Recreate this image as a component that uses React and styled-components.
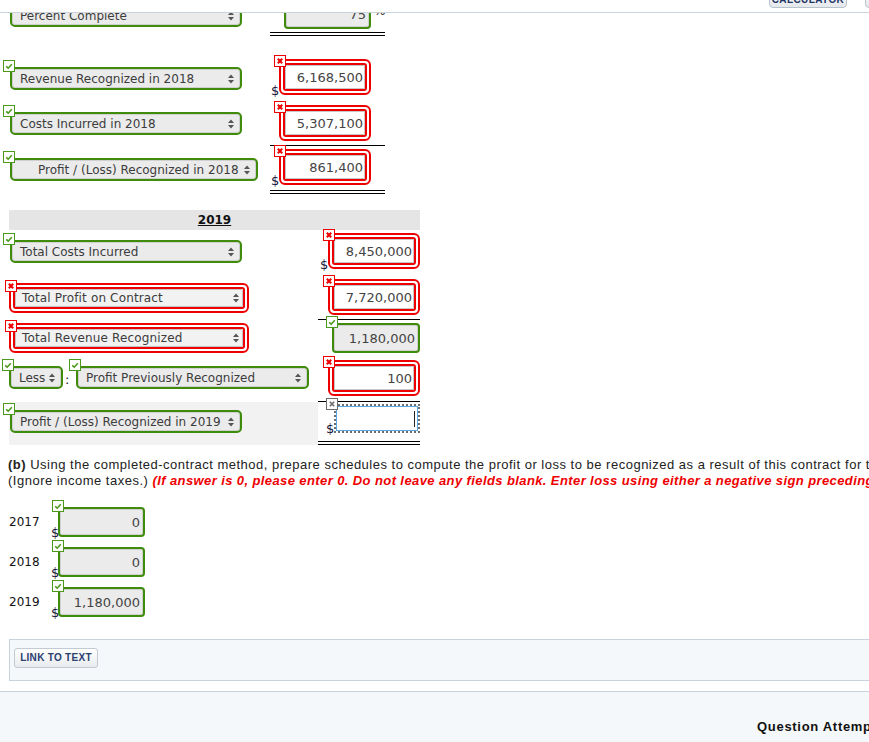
import React from 'react';
import styled, { createGlobalStyle } from 'styled-components';

const GREEN = '#3f8b0c';
const RED = '#ee0000';

const GlobalStyle = createGlobalStyle`
  html, body {
    margin: 0;
    padding: 0;
    background: #fff;
    overflow: hidden;
  }
  body {
    font-family: "DejaVu Sans", Verdana, sans-serif;
    color: #222;
  }
`;

const Page = styled.div`
  width: 869px;
  height: 742px;
  display: flex;
  flex-direction: column;
  overflow: hidden;
`;

const Header = styled.div`
  flex-shrink: 0;
  height: 12px;
  border-bottom: 1px solid #cdd3da;
  display: flex;
  gap: 18px;
  padding-left: 769px;
  overflow: hidden;
`;

const TopButton = styled.div`
  flex-shrink: 0;
  width: ${p => p.$w}px;
  height: 22px;
  margin-top: -14px;
  box-sizing: border-box;
  border: 1px solid #b8c2cd;
  border-radius: 4px;
  background: linear-gradient(#fbfbfb, #e6e9ec);
  font: bold 10px "Liberation Sans", Arial, sans-serif;
  letter-spacing: 0.4px;
  color: #1f3466;
  display: flex;
  align-items: center;
  justify-content: center;
  padding-top: 4px;
`;

const Main = styled.div`
  flex: 1;
  overflow: hidden;
  display: flex;
  flex-direction: column;
`;

const Content = styled.div`
  padding-left: 9px;
  display: flex;
  flex-direction: column;
`;

const Row = styled.div`
  display: grid;
  grid-template-columns: ${p => p.$left}px ${p => p.$right}px;
  height: ${p => p.$h}px;
  margin-top: ${p => p.$mt || 0}px;
`;

const LeftCell = styled.div`
  display: flex;
  align-items: flex-end;
  box-sizing: border-box;
  padding-bottom: ${p => p.$pb}px;
  background: ${p => (p.$shade ? '#f2f2f2' : 'transparent')};
`;

const RightCell = styled.div`
  display: flex;
  align-items: flex-end;
  justify-content: flex-end;
  box-sizing: border-box;
  padding-bottom: ${p => p.$pb}px;
  padding-right: ${p => p.$pr || 0}px;
  border-bottom: ${p =>
    p.$rule === 'double' ? '4px double #000' : p.$rule === 'single' ? '1px solid #000' : 'none'};
`;

const Field = styled.div`
  position: relative;
  display: inline-flex;
  margin-left: ${p => p.$ml || 0}px;
`;

const Badge = styled.span`
  position: absolute;
  top: ${p => p.$top}px;
  left: ${p => p.$left}px;
  width: 12px;
  height: 12px;
  box-sizing: border-box;
  border: 1px solid ${p => p.$color};
  background: #fff;
  display: flex;
  align-items: center;
  justify-content: center;
  z-index: 2;
`;

const SelectBox = styled.div`
  width: ${p => p.$w}px;
  height: 23px;
  box-sizing: border-box;
  border: 2px solid ${GREEN};
  border-radius: 5px;
  background: #ebebeb;
  box-shadow: inset 0 0 0 1px #d0d0d0;
  display: flex;
  align-items: center;
  justify-content: space-between;
  padding: 0 6px 0 ${p => p.$indent || 8}px;
  font-size: 12px;
  color: #3c3c3c;
  white-space: nowrap;
`;

const RedFrame = styled.div`
  width: ${p => p.$w}px;
  height: ${p => p.$h}px;
  box-sizing: border-box;
  border: 2px solid ${RED};
  border-radius: 6px;
  padding: 2px;
  background: #fff;
  display: flex;
`;

const RedInner = styled.div`
  flex: 1;
  display: flex;
  border: 2px solid ${RED};
  border-radius: 3px;
`;

const PlainSelect = styled.div`
  flex: 1;
  box-sizing: border-box;
  border: 1px solid #c4c4c4;
  border-radius: 2px;
  background: #f2f2f2;
  display: flex;
  align-items: center;
  justify-content: space-between;
  padding: 0 3px 0 6px;
  font-size: 12px;
  letter-spacing: 0.15px;
  color: #3c3c3c;
  white-space: nowrap;
`;

const TextBox = styled.div`
  flex: 1;
  box-sizing: border-box;
  border: 1px solid #c8c8c8;
  background: #fff;
  display: flex;
  align-items: center;
  justify-content: flex-end;
  padding-right: 1px;
  font-size: 13px;
  color: #444;
`;

const GreenInput = styled.div`
  width: ${p => p.$w}px;
  height: 30px;
  box-sizing: border-box;
  border: 2px solid ${GREEN};
  border-radius: 4px;
  background: #ebebeb;
  box-shadow: inset 0 0 0 1px #d0d0d0;
  display: flex;
  align-items: center;
  justify-content: flex-end;
  padding-right: 3px;
  font-size: 13px;
  color: #444;
`;

const FocusInput = styled.div`
  width: 86px;
  height: 29px;
  box-sizing: border-box;
  border: 2px dotted #6f6f6f;
  display: flex;
`;

const FocusInner = styled.div`
  flex: 1;
  border: 1px solid #5aa9e6;
  background: #fff;
  display: flex;
  align-items: center;
  justify-content: flex-end;
  padding-right: 2px;
`;

const Caret = styled.span`
  width: 1px;
  height: 16px;
  background: #222;
`;

const Dollar = styled.span`
  width: 8px;
  font-size: 13px;
  line-height: 11px;
  color: #141438;
  margin-bottom: -1px;
`;

const Suffix = styled.span`
  width: 14px;
  align-self: stretch;
  box-sizing: border-box;
  padding: 12px 0 0 3px;
  font-size: 12px;
  color: #222;
`;

const Colon = styled.span`
  width: 11px;
  font-size: 13px;
  color: #222;
  padding-left: 2px;
  margin-bottom: 2px;
`;

const YearBand = styled.div`
  width: 411px;
  height: 20px;
  margin-top: 16px;
  background: #e5e5e5;
  display: flex;
  align-items: center;
  justify-content: center;
  font-weight: bold;
  font-size: 12px;
  text-decoration: underline;
  color: #111;
`;

const Instructions = styled.div`
  margin-top: 12px;
  margin-left: -1px;
  font-family: "Liberation Sans", Arial, sans-serif;
  font-size: 13px;
  letter-spacing: 0.5px;
  line-height: 16px;
  white-space: nowrap;
  color: #222;
`;

const Warn = styled.span`
  color: ${RED};
  font-weight: bold;
  font-style: italic;
  letter-spacing: 0.4px;
`;

const YearList = styled.div`
  margin-top: 11px;
  display: flex;
  flex-direction: column;
`;

const YearRow = styled.div`
  height: 40px;
  display: grid;
  grid-template-columns: 42px 7px 87px;
  align-items: end;
  box-sizing: border-box;
  padding-bottom: 3px;
`;

const YearLabel = styled.span`
  height: 30px;
  display: flex;
  align-items: center;
  padding-top: 1px;
  font-size: 12px;
  color: #111;
`;

const LinkPanel = styled.div`
  margin-top: 19px;
  width: 900px;
  height: 42px;
  box-sizing: border-box;
  border: 1px solid #c8d2dd;
  background: #f5f8fb;
  padding: 6px 4px;
`;

const LinkButton = styled.button`
  width: 84px;
  height: 20px;
  border: 1px solid #c3cad2;
  border-radius: 3px;
  background: linear-gradient(#ffffff, #e8ebee);
  font: bold 10px "Liberation Sans", Arial, sans-serif;
  letter-spacing: 0.3px;
  color: #2b4170;
  padding: 0;
  cursor: pointer;
`;

const BottomBar = styled.div`
  margin-top: 10px;
  flex: 1;
  border-top: 1px solid #c8d2dd;
  background: #f5f8fb;
  padding: 27px 0 0 757px;
  font: bold 13px "Liberation Sans", Arial, sans-serif;
  letter-spacing: 0.7px;
  color: #111;
  white-space: nowrap;
`;

const Arrows = () => (
  <svg width="6" height="10" viewBox="0 0 6 10">
    <path d="M0 4 L3 0.5 L6 4Z M0 6 L3 9.5 L6 6Z" fill="#555" />
  </svg>
);

const Mark = ({ kind, top, left }) => {
  if (kind === 'ok') {
    return (
      <Badge $top={top} $left={left} $color="#4c9a1c">
        <svg width="10" height="10" viewBox="0 0 10 10">
          <path d="M2.2 5.4 L4.2 7.2 L7.8 3.2" stroke="#4c9a1c" strokeWidth="1.6" fill="none" />
        </svg>
      </Badge>
    );
  }
  const color = kind === 'bad' ? RED : '#6b6b6b';
  return (
    <Badge $top={top} $left={left} $color={color}>
      <svg width="10" height="10" viewBox="0 0 10 10">
        <path
          d="M2.8 2.8 L7.2 7.2 M7.2 2.8 L2.8 7.2"
          stroke={color}
          strokeWidth={kind === 'bad' ? 2.1 : 1.6}
          fill="none"
        />
      </svg>
    </Badge>
  );
};

const GreenSelect = ({ label, w = 232, indent, ml = 1 }) => (
  <Field $ml={ml}>
    <Mark kind="ok" top={-7} left={-7} />
    <SelectBox $w={w} $indent={indent}>
      <span>{label}</span>
      <Arrows />
    </SelectBox>
  </Field>
);

const RedSelect = ({ label }) => (
  <Field>
    <Mark kind="bad" top={-3} left={-4} />
    <RedFrame $w={240} $h={30}>
      <RedInner>
        <PlainSelect>
          <span>{label}</span>
          <Arrows />
        </PlainSelect>
      </RedInner>
    </RedFrame>
  </Field>
);

const RedAmount = ({ value }) => (
  <Field>
    <Mark kind="bad" top={-4} left={-5} />
    <RedFrame $w={92} $h={36}>
      <RedInner>
        <TextBox>{value}</TextBox>
      </RedInner>
    </RedFrame>
  </Field>
);

const GreenAmount = ({ value, w = 88, mark = true }) => (
  <Field>
    {mark && <Mark kind="ok" top={-7} left={-6} />}
    <GreenInput $w={w}>{value}</GreenInput>
  </Field>
);

const App = () => {
  return (
    <Page>
      <GlobalStyle />
      <Header>
        <TopButton $w={78}>CALCULATOR</TopButton>
        <TopButton $w={60}>CLOSE</TopButton>
      </Header>
      <Main>
        <Content>
          {/* 2018 schedule */}
          <Row $left={261} $right={115} $h={44} $mt={-21}>
            <LeftCell $pb={9}>
              <GreenSelect label="Percent Complete" />
            </LeftCell>
            <RightCell $pb={3} $rule="double">
              <GreenAmount value="75" w={87} mark={false} />
              <Suffix>%</Suffix>
            </RightCell>
          </Row>
          <Row $left={261} $right={115} $h={61}>
            <LeftCell $pb={7}>
              <GreenSelect label="Revenue Recognized in 2018" />
            </LeftCell>
            <RightCell $pb={2} $pr={14}>
              <Dollar>$</Dollar>
              <RedAmount value="6,168,500" />
            </RightCell>
          </Row>
          <Row $left={261} $right={115} $h={49}>
            <LeftCell $pb={11}>
              <GreenSelect label="Costs Incurred in 2018" />
            </LeftCell>
            <RightCell $pb={4} $pr={14} $rule="single">
              <RedAmount value="5,307,100" />
            </RightCell>
          </Row>
          <Row $left={261} $right={115} $h={48}>
            <LeftCell $pb={13}>
              <GreenSelect label="Profit / (Loss) Recognized in 2018" w={248} indent={26} />
            </LeftCell>
            <RightCell $pb={5} $pr={14} $rule="double">
              <Dollar>$</Dollar>
              <RedAmount value="861,400" />
            </RightCell>
          </Row>

          {/* 2019 schedule */}
          <YearBand>2019</YearBand>
          <Row $left={309} $right={102} $h={44}>
            <LeftCell $pb={11}>
              <GreenSelect label="Total Costs Incurred" />
            </LeftCell>
            <RightCell $pb={5}>
              <Dollar>$</Dollar>
              <RedAmount value="8,450,000" />
            </RightCell>
          </Row>
          <Row $left={309} $right={102} $h={46}>
            <LeftCell $pb={7}>
              <RedSelect label="Total Profit on Contract" />
            </LeftCell>
            <RightCell $pb={4} $rule="single">
              <RedAmount value="7,720,000" />
            </RightCell>
          </Row>
          <Row $left={309} $right={102} $h={36}>
            <LeftCell $pb={3}>
              <RedSelect label="Total Revenue Recognized" />
            </LeftCell>
            <RightCell $pb={3}>
              <GreenAmount value="1,180,000" />
            </RightCell>
          </Row>
          <Row $left={309} $right={102} $h={46}>
            <LeftCell $pb={13}>
              <GreenSelect label="Less" w={54} ml={0} />
              <Colon>:</Colon>
              <GreenSelect label="Profit Previously Recognized" w={233} ml={0} />
            </LeftCell>
            <RightCell $pb={5} $rule="single">
              <RedAmount value="100" />
            </RightCell>
          </Row>
          <Row $left={309} $right={102} $h={43}>
            <LeftCell $pb={12} $shade>
              <GreenSelect label="Profit / (Loss) Recognized in 2019" />
            </LeftCell>
            <RightCell $pb={8} $rule="double">
              <Dollar>$</Dollar>
              <Field>
                <Mark kind="off" top={-6} left={-8} />
                <FocusInput>
                  <FocusInner>
                    <Caret />
                  </FocusInner>
                </FocusInput>
              </Field>
            </RightCell>
          </Row>

          <Instructions>
            <b>(b)</b> Using the completed-contract method, prepare schedules to compute the profit or loss
            to be recognized as a result of this contract for the years 2017, 2018, and 2019.
            <br />
            (Ignore income taxes.){' '}
            <Warn>
              (If answer is 0, please enter 0. Do not leave any fields blank. Enter loss using either a
              negative sign preceding the number e.g. -45 or parentheses e.g. (45).)
            </Warn>
          </Instructions>

          <YearList>
            {[
              ['2017', '0'],
              ['2018', '0'],
              ['2019', '1,180,000'],
            ].map(([year, amount]) => (
              <YearRow key={year}>
                <YearLabel>{year}</YearLabel>
                <Dollar>$</Dollar>
                <GreenAmount value={amount} w={87} />
              </YearRow>
            ))}
          </YearList>

          <LinkPanel>
            <LinkButton>LINK TO TEXT</LinkButton>
          </LinkPanel>
        </Content>
        <BottomBar>Question Attempts: 0 of 1 used</BottomBar>
      </Main>
    </Page>
  );
};

export default App;
